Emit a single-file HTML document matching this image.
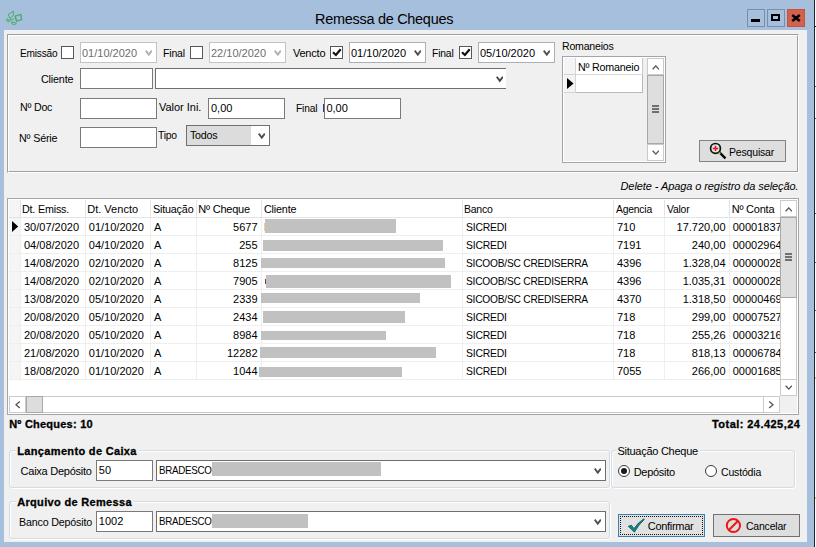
<!DOCTYPE html>
<html lang="pt-BR"><head><meta charset="utf-8"><title>Remessa de Cheques</title>
<style>
html,body{margin:0;padding:0}
body{width:816px;height:547px;position:relative;overflow:hidden;background:#a6bfdd;font-family:'Liberation Sans',sans-serif;font-size:11px;color:#000}
.a{position:absolute;display:block}
.t{position:absolute;white-space:pre;transform-origin:0 0}
.clipc{}
</style></head>
<body>
<div class="a" style="left:4px;top:30px;width:803px;height:512px;background:#f0f0f0;"></div>
<div class="a" style="left:814px;top:0px;width:1px;height:547px;background:#20202c;"></div>
<div class="a" style="left:815px;top:0px;width:1px;height:547px;background:#fff;"></div>
<div class="a" style="left:815px;top:26px;width:1px;height:1px;background:#20202c;"></div>
<div class="a" style="left:815px;top:86px;width:1px;height:1px;background:#555;"></div>
<div class="a" style="left:815px;top:118px;width:1px;height:1px;background:#555;"></div>
<div class="a" style="left:815px;top:213px;width:1px;height:1px;background:#555;"></div>
<div class="a" style="left:815px;top:262px;width:1px;height:1px;background:#555;"></div>
<div class="a" style="left:815px;top:310px;width:1px;height:1px;background:#555;"></div>
<div class="a" style="left:815px;top:352px;width:1px;height:1px;background:#555;"></div>
<div class="a" style="left:815px;top:377px;width:1px;height:2px;background:#e8c860;"></div>
<div class="a" style="left:815px;top:497px;width:1px;height:2px;background:#e8c860;"></div>
<div class="a" style="left:747px;top:9px;width:18px;height:18px;border:1px solid #7c8da6;box-sizing:border-box;"><div class="a" style="left:3px;top:9px;width:9px;height:3px;background:#000"></div></div>
<div class="a" style="left:767px;top:9px;width:18px;height:18px;border:1px solid #7c8da6;box-sizing:border-box;"><div class="a" style="left:3px;top:4px;width:5px;height:3px;border:2px solid #000"></div></div>
<div class="a" style="left:787px;top:9px;width:18px;height:18px;background:#d4614d;border:1px solid #c8523f;box-sizing:border-box;"><svg class="a" style="left:3px;top:4px" width="10" height="9" viewBox="0 0 10 9"><path d="M1.2 1 L8.8 7 M8.8 1 L1.2 7" stroke="#000" stroke-width="2.5" fill="none"/></svg></div>
<svg class="a" style="left:4px;top:9px" width="20" height="18" viewBox="4 9 20 18" fill="none" stroke="#3fae57" stroke-width="1" stroke-linejoin="round" opacity="0.9">
<path d="M8 14.6 L13.4 11.2 L13.4 15.4 L10 18.3 Z"/>
<path d="M15.2 16.2 L20.8 14.4 L21.6 19.7 L16.6 21.2 Z" stroke-width="1.4"/>
<path d="M6.3 19.4 L8 19 L9.6 21.2 L7.8 21.9 Z"/>
<path d="M11.4 22.8 L14.6 22 L16.4 23.8 L12.9 24.6 Z"/>
<path d="M10.8 19.8 L10 18.3 M10.8 19.8 L15.2 18.6 M10.8 19.8 L9 20.3 M10.8 19.8 L12.5 22.4" stroke-width="0.8"/>
</svg>
<div class="a" style="left:7px;top:34px;width:792px;height:139px;box-sizing:border-box;border:1px solid #fff;border-top-color:#a0a0a0;border-left-color:#a0a0a0;"></div>
<div class="a" style="left:8px;top:35px;width:790px;height:137px;box-sizing:border-box;border:1px solid #a0a0a0;border-top-color:#fff;border-left-color:#fff;"></div>
<div class="a" style="left:61px;top:46px;width:13px;height:13px;box-sizing:border-box;border:1px solid #585858;background:#fff;"></div>
<div class="a" style="left:80px;top:42px;width:77px;height:21px;box-sizing:border-box;border:1px solid #c4c4c4;background:#fff;"></div>
<svg class="a" style="left:144.5px;top:50px" width="7.6" height="6.6" viewBox="0 0 7.6 6.6"><polyline points="0.7,0.7 3.8,4.699999999999999 6.8999999999999995,0.7" fill="none" stroke="#b0b0b0" stroke-width="1.9"/></svg>
<div class="a" style="left:190px;top:46px;width:13px;height:13px;box-sizing:border-box;border:1px solid #585858;background:#fff;"></div>
<div class="a" style="left:209px;top:42px;width:77px;height:21px;box-sizing:border-box;border:1px solid #c4c4c4;background:#fff;"></div>
<svg class="a" style="left:273.5px;top:50px" width="7.6" height="6.6" viewBox="0 0 7.6 6.6"><polyline points="0.7,0.7 3.8,4.699999999999999 6.8999999999999995,0.7" fill="none" stroke="#b0b0b0" stroke-width="1.9"/></svg>
<div class="a" style="left:330px;top:46px;width:13px;height:13px;box-sizing:border-box;border:1px solid #585858;background:#fff;"><svg class="a" style="left:0;top:0" width="11" height="11" viewBox="0 0 11 11"><path d="M2 5.3 L4.9 8 L9.7 2.3" fill="none" stroke="#111" stroke-width="2.2"/></svg></div>
<div class="a" style="left:349px;top:42px;width:77px;height:21px;box-sizing:border-box;border:1px solid #a9b0b8;background:#fff;"></div>
<svg class="a" style="left:413.5px;top:50px" width="7.6" height="6.6" viewBox="0 0 7.6 6.6"><polyline points="0.7,0.7 3.8,4.699999999999999 6.8999999999999995,0.7" fill="none" stroke="#505050" stroke-width="1.9"/></svg>
<div class="a" style="left:459px;top:46px;width:13px;height:13px;box-sizing:border-box;border:1px solid #585858;background:#fff;"><svg class="a" style="left:0;top:0" width="11" height="11" viewBox="0 0 11 11"><path d="M2 5.3 L4.9 8 L9.7 2.3" fill="none" stroke="#111" stroke-width="2.2"/></svg></div>
<div class="a" style="left:478px;top:42px;width:77px;height:21px;box-sizing:border-box;border:1px solid #a9b0b8;background:#fff;"></div>
<svg class="a" style="left:542.5px;top:50px" width="7.6" height="6.6" viewBox="0 0 7.6 6.6"><polyline points="0.7,0.7 3.8,4.699999999999999 6.8999999999999995,0.7" fill="none" stroke="#505050" stroke-width="1.9"/></svg>
<div class="a" style="left:80px;top:68px;width:73px;height:21px;box-sizing:border-box;border:1px solid #7a7a7a;background:#fff;"></div>
<div class="a" style="left:155px;top:68px;width:351px;height:21px;box-sizing:border-box;border:1px solid #6e6e6e;border-right:none;background:#fff;"></div>
<svg class="a" style="left:495.8px;top:76px" width="7.6" height="6.8" viewBox="0 0 7.6 6.8"><polyline points="0.7,0.7 3.8,4.8999999999999995 6.8999999999999995,0.7" fill="none" stroke="#484848" stroke-width="1.9"/></svg>
<div class="a" style="left:80px;top:98px;width:77px;height:21px;box-sizing:border-box;border:1px solid #7a7a7a;background:#fff;"></div>
<div class="a" style="left:208px;top:98px;width:77px;height:21px;box-sizing:border-box;border:1px solid #7a7a7a;background:#fff;"></div>
<div class="a" style="left:323px;top:104px;width:1px;height:8px;background:#34348c;"></div>
<div class="a" style="left:324px;top:98px;width:77px;height:21px;box-sizing:border-box;border:1px solid #7a7a7a;background:#fff;"></div>
<div class="a" style="left:80px;top:127px;width:77px;height:21px;box-sizing:border-box;border:1px solid #7a7a7a;background:#fff;"></div>
<div class="a" style="left:186px;top:125px;width:84px;height:21px;box-sizing:border-box;border:1px solid #707070;background:#dcdcdc;"><div class="a" style="left:64px;top:0;width:18px;height:19px;background:#fff"></div></div>
<svg class="a" style="left:257.6px;top:133px" width="7.6" height="6.6" viewBox="0 0 7.6 6.6"><polyline points="0.7,0.7 3.8,4.699999999999999 6.8999999999999995,0.7" fill="none" stroke="#505050" stroke-width="1.9"/></svg>
<div class="a" style="left:562px;top:56px;width:104px;height:107px;box-sizing:border-box;border:1px solid #a2a5ab;"></div>
<div class="a" style="left:563px;top:57px;width:102px;height:105px;box-sizing:border-box;border:1px solid #fff;"></div>
<div class="a" style="left:564px;top:58px;width:12px;height:17px;box-sizing:border-box;border-right:1px solid #d4d4d4;border-bottom:1px solid #d4d4d4;background:#f4f4f4;"></div>
<div class="a" style="left:576px;top:58px;width:67px;height:17px;box-sizing:border-box;border-right:1px solid #c8c8c8;border-bottom:1px solid #d8d8d8;background:#fff;"></div>
<div class="a" style="left:564px;top:75px;width:12px;height:18px;box-sizing:border-box;border-right:1px solid #d4d4d4;border-bottom:1px solid #d4d4d4;background:#f4f4f4;"></div>
<div class="a" style="left:576px;top:75px;width:67px;height:18px;box-sizing:border-box;border-right:1px solid #b8b8b8;border-bottom:1px solid #b8b8b8;background:#fff;"></div>
<svg class="a" style="left:567px;top:78px" width="7" height="12" viewBox="0 0 7 12"><path d="M0 0 L6.5 5.5 L0 11 Z" fill="#000"/></svg>
<div class="a" style="left:647px;top:58px;width:17px;height:103px;background:#fff;box-sizing:border-box;border:1px solid #cacaca;"></div>
<div class="a" style="left:647px;top:58px;width:17px;height:17px;box-sizing:border-box;border:1px solid #cacaca;"></div>
<div class="a" style="left:647px;top:144px;width:17px;height:17px;box-sizing:border-box;border:1px solid #cacaca;"></div>
<svg class="a" style="left:651.8px;top:64.6px" width="7.6" height="6" viewBox="0 0 7.6 6"><polyline points="0.7,4.3 3.8,0.9 6.8999999999999995,4.3" fill="none" stroke="#555" stroke-width="1.3"/></svg>
<div class="a" style="left:647px;top:75px;width:17px;height:69px;box-sizing:border-box;border:1px solid #a8a8a8;background:#dedede;"></div>
<div class="a" style="left:652px;top:105px;width:7px;height:2px;background:#707070;"></div>
<div class="a" style="left:652px;top:108px;width:7px;height:2px;background:#707070;"></div>
<div class="a" style="left:652px;top:111px;width:7px;height:2px;background:#707070;"></div>
<svg class="a" style="left:651.8px;top:150px" width="7.6" height="6" viewBox="0 0 7.6 6"><polyline points="0.7,0.7 3.8,4.1 6.8999999999999995,0.7" fill="none" stroke="#555" stroke-width="1.3"/></svg>
<div class="a" style="left:699px;top:140px;width:87px;height:22px;box-sizing:border-box;border:1px solid #828282;background:#dedede;"></div>
<svg class="a" style="left:708px;top:141px" width="20" height="20" viewBox="708 141 20 20">
<path d="M719.2 152.1 L725.5 158.4" stroke="#0a0a0a" stroke-width="2.4"/>
<circle cx="715.5" cy="148.4" r="4.9" fill="#d6e4e8" stroke="#111" stroke-width="1.7"/>
<path d="M712.8 148.4 H718.2 M715.5 145.8 V151.1" stroke="#f01010" stroke-width="1.5"/>
<circle cx="719.7" cy="153.1" r="0.9" fill="#f0e428"/>
</svg>
<div class="a" style="left:7px;top:198px;width:792px;height:217px;box-sizing:border-box;border:1px solid #a2a5ab;background:#fff;"></div>
<div class="a" style="left:9px;top:200px;width:11px;height:180px;background:#f5f5f5;"></div>
<div class="a" style="left:9px;top:217px;width:771px;height:1px;background:#e4e4e4;"></div>
<div class="a" style="left:9px;top:235px;width:771px;height:1px;background:#efefef;"></div>
<div class="a" style="left:9px;top:253px;width:771px;height:1px;background:#efefef;"></div>
<div class="a" style="left:9px;top:271px;width:771px;height:1px;background:#efefef;"></div>
<div class="a" style="left:9px;top:289px;width:771px;height:1px;background:#efefef;"></div>
<div class="a" style="left:9px;top:307px;width:771px;height:1px;background:#efefef;"></div>
<div class="a" style="left:9px;top:325px;width:771px;height:1px;background:#efefef;"></div>
<div class="a" style="left:9px;top:343px;width:771px;height:1px;background:#efefef;"></div>
<div class="a" style="left:9px;top:361px;width:771px;height:1px;background:#efefef;"></div>
<div class="a" style="left:9px;top:379px;width:771px;height:1px;background:#efefef;"></div>
<div class="a" style="left:20px;top:200px;width:1px;height:18px;background:#e4e4e4;"></div>
<div class="a" style="left:20px;top:218px;width:1px;height:162px;background:#efefef;"></div>
<div class="a" style="left:85px;top:200px;width:1px;height:18px;background:#e4e4e4;"></div>
<div class="a" style="left:85px;top:218px;width:1px;height:162px;background:#efefef;"></div>
<div class="a" style="left:150px;top:200px;width:1px;height:18px;background:#e4e4e4;"></div>
<div class="a" style="left:150px;top:218px;width:1px;height:162px;background:#efefef;"></div>
<div class="a" style="left:196px;top:200px;width:1px;height:18px;background:#e4e4e4;"></div>
<div class="a" style="left:196px;top:218px;width:1px;height:162px;background:#efefef;"></div>
<div class="a" style="left:261px;top:200px;width:1px;height:18px;background:#e4e4e4;"></div>
<div class="a" style="left:261px;top:218px;width:1px;height:162px;background:#efefef;"></div>
<div class="a" style="left:462px;top:200px;width:1px;height:18px;background:#e4e4e4;"></div>
<div class="a" style="left:462px;top:218px;width:1px;height:162px;background:#efefef;"></div>
<div class="a" style="left:613px;top:200px;width:1px;height:18px;background:#e4e4e4;"></div>
<div class="a" style="left:613px;top:218px;width:1px;height:162px;background:#efefef;"></div>
<div class="a" style="left:664px;top:200px;width:1px;height:18px;background:#e4e4e4;"></div>
<div class="a" style="left:664px;top:218px;width:1px;height:162px;background:#efefef;"></div>
<div class="a" style="left:729px;top:200px;width:1px;height:18px;background:#e4e4e4;"></div>
<div class="a" style="left:729px;top:218px;width:1px;height:162px;background:#efefef;"></div>
<div class="a" style="left:265px;top:219px;width:131px;height:14px;background:#c1c1c1;"></div>
<div class="a" style="left:263px;top:240px;width:180px;height:11px;background:#c1c1c1;"></div>
<div class="a" style="left:261px;top:258px;width:184px;height:10px;background:#c1c1c1;"></div>
<div class="a" style="left:266px;top:275px;width:185px;height:13px;background:#c1c1c1;"></div>
<div class="a" style="left:261px;top:293px;width:159px;height:10px;background:#c1c1c1;"></div>
<div class="a" style="left:263px;top:311px;width:142px;height:12px;background:#c1c1c1;"></div>
<div class="a" style="left:261px;top:331px;width:125px;height:9px;background:#c1c1c1;"></div>
<div class="a" style="left:260px;top:347px;width:176px;height:11px;background:#c1c1c1;"></div>
<div class="a" style="left:259px;top:367px;width:143px;height:10px;background:#c1c1c1;"></div>
<div class="a" style="left:264px;top:223px;width:1px;height:8px;background:#f3cf8e;"></div>
<div class="a" style="left:265px;top:279px;width:1px;height:5px;background:#5a4658;"></div>
<svg class="a" style="left:12px;top:221px" width="7" height="12" viewBox="0 0 7 12"><path d="M0 0 L6.2 5.5 L0 11 Z" fill="#000"/></svg>
<div class="t clipc" style="left:732.70px;top:220px;font-size:11px;line-height:14px;">000018375</div>
<div class="t clipc" style="left:732.70px;top:238px;font-size:11px;line-height:14px;">000029645</div>
<div class="t clipc" style="left:732.70px;top:256px;font-size:11px;line-height:14px;">000000285</div>
<div class="t clipc" style="left:732.70px;top:274px;font-size:11px;line-height:14px;">000000285</div>
<div class="t clipc" style="left:732.70px;top:292px;font-size:11px;line-height:14px;">000004695</div>
<div class="t clipc" style="left:732.70px;top:310px;font-size:11px;line-height:14px;">000075275</div>
<div class="t clipc" style="left:732.70px;top:328px;font-size:11px;line-height:14px;">000032165</div>
<div class="t clipc" style="left:732.70px;top:346px;font-size:11px;line-height:14px;">000067845</div>
<div class="t clipc" style="left:732.70px;top:364px;font-size:11px;line-height:14px;">000016855</div>
<div class="a" style="left:780px;top:200px;width:17px;height:196px;background:#fff;"></div>
<div class="a" style="left:780px;top:200px;width:17px;height:196px;background:#fff;box-sizing:border-box;border:1px solid #cacaca;"></div>
<div class="a" style="left:780px;top:200px;width:17px;height:17px;box-sizing:border-box;border:1px solid #cacaca;"></div>
<div class="a" style="left:780px;top:379px;width:17px;height:17px;box-sizing:border-box;border:1px solid #cacaca;"></div>
<svg class="a" style="left:784.8px;top:206.6px" width="7.6" height="6" viewBox="0 0 7.6 6"><polyline points="0.7,4.3 3.8,0.9 6.8999999999999995,4.3" fill="none" stroke="#555" stroke-width="1.3"/></svg>
<div class="a" style="left:780px;top:217px;width:17px;height:81px;box-sizing:border-box;border:1px solid #a8a8a8;background:#dedede;"></div>
<div class="a" style="left:785px;top:253px;width:7px;height:2px;background:#707070;"></div>
<div class="a" style="left:785px;top:256px;width:7px;height:2px;background:#707070;"></div>
<div class="a" style="left:785px;top:259px;width:7px;height:2px;background:#707070;"></div>
<svg class="a" style="left:784.8px;top:385px" width="7.6" height="6" viewBox="0 0 7.6 6"><polyline points="0.7,0.7 3.8,4.1 6.8999999999999995,0.7" fill="none" stroke="#555" stroke-width="1.3"/></svg>
<div class="a" style="left:9px;top:396px;width:771px;height:17px;background:#fff;border:1px solid #cacaca;box-sizing:border-box;"></div>
<div class="a" style="left:9px;top:396px;width:17px;height:17px;border:1px solid #cacaca;box-sizing:border-box;"></div>
<div class="a" style="left:763px;top:396px;width:17px;height:17px;border:1px solid #cacaca;box-sizing:border-box;"></div>
<svg class="a" style="left:15px;top:401px" width="6" height="8" viewBox="0 0 6 8"><polyline points="4.8,0.5 1,3.8 4.8,7.1" fill="none" stroke="#555" stroke-width="1.3"/></svg>
<svg class="a" style="left:768px;top:401px" width="6" height="8" viewBox="0 0 6 8"><polyline points="1.2,0.5 5,3.8 1.2,7.1" fill="none" stroke="#555" stroke-width="1.3"/></svg>
<div class="a" style="left:26px;top:396px;width:17px;height:17px;box-sizing:border-box;border:1px solid #a8a8a8;background:#dddddd;"></div>
<div class="a" style="left:780px;top:396px;width:17px;height:17px;background:#f0f0f0;"></div>
<div class="a" style="left:10px;top:451px;width:601px;height:38px;box-sizing:border-box;border:1px solid #fff;border-radius:3px;"></div>
<div class="a" style="left:9px;top:450px;width:601px;height:38px;box-sizing:border-box;border:1px solid #d3dce4;border-radius:3px;"></div>
<div class="a" style="left:16.3px;top:449px;width:123.00000000000001px;height:4px;background:#f0f0f0;"></div>
<div class="a" style="left:96px;top:460px;width:57px;height:21px;box-sizing:border-box;border:1px solid #7a7a7a;background:#fff;"></div>
<div class="a" style="left:156px;top:460px;width:450px;height:21px;box-sizing:border-box;border:1px solid #6e6e6e;background:#fff;"></div>
<div class="a" style="left:212px;top:462px;width:169px;height:14px;background:#c1c1c1;"></div>
<svg class="a" style="left:593.5px;top:468px" width="7.6" height="6.6" viewBox="0 0 7.6 6.6"><polyline points="0.7,0.7 3.8,4.699999999999999 6.8999999999999995,0.7" fill="none" stroke="#505050" stroke-width="1.9"/></svg>
<div class="a" style="left:10px;top:502px;width:601px;height:38px;box-sizing:border-box;border:1px solid #fff;border-radius:3px;"></div>
<div class="a" style="left:9px;top:501px;width:601px;height:38px;box-sizing:border-box;border:1px solid #d3dce4;border-radius:3px;"></div>
<div class="a" style="left:16.2px;top:500px;width:118.2px;height:4px;background:#f0f0f0;"></div>
<div class="a" style="left:96px;top:511px;width:57px;height:21px;box-sizing:border-box;border:1px solid #7a7a7a;background:#fff;"></div>
<div class="a" style="left:156px;top:511px;width:450px;height:21px;box-sizing:border-box;border:1px solid #6e6e6e;background:#fff;"></div>
<div class="a" style="left:212px;top:514px;width:96px;height:14px;background:#c1c1c1;"></div>
<svg class="a" style="left:593.5px;top:519px" width="7.6" height="6.6" viewBox="0 0 7.6 6.6"><polyline points="0.7,0.7 3.8,4.699999999999999 6.8999999999999995,0.7" fill="none" stroke="#505050" stroke-width="1.9"/></svg>
<div class="a" style="left:612px;top:451px;width:184px;height:38px;box-sizing:border-box;border:1px solid #fff;border-radius:3px;"></div>
<div class="a" style="left:611px;top:450px;width:184px;height:38px;box-sizing:border-box;border:1px solid #d3dce4;border-radius:3px;"></div>
<div class="a" style="left:616.4px;top:449px;width:83.60000000000002px;height:4px;background:#f0f0f0;"></div>
<div class="a" style="left:618px;top:465px;width:12px;height:12px;box-sizing:border-box;border:1px solid #3a3a3a;border-radius:50%;background:#fff;"><div class="a" style="left:2px;top:2px;width:6px;height:6px;border-radius:50%;background:#1a1a1a"></div></div>
<div class="a" style="left:705px;top:465px;width:12px;height:12px;box-sizing:border-box;border:1px solid #3a3a3a;border-radius:50%;background:#fff;"></div>
<div class="a" style="left:618px;top:514px;width:87px;height:23px;box-sizing:border-box;border:1px solid #3c7fb1;background:#e1e1e1;"><div class="a" style="left:1px;top:1px;width:81px;height:17px;border:1px dotted #111"></div></div>
<svg class="a" style="left:626px;top:518px" width="19" height="16" viewBox="626 518 19 16">
<path d="M628.2 526.3 L631.4 525.2 L634 528.6 Q638 522.4 643.9 518.8 L644.3 519.5 Q638.6 524.6 634.4 532.2 Z" fill="#0f8a8a" stroke="#0a4444" stroke-width="0.7" stroke-linejoin="round"/>
</svg>
<div class="a" style="left:713px;top:514px;width:87px;height:23px;box-sizing:border-box;border:1px solid #707070;background:#dedede;"></div>
<svg class="a" style="left:724px;top:517px" width="18" height="18" viewBox="724 517 18 18">
<circle cx="733.4" cy="525.5" r="6.6" fill="none" stroke="#f01414" stroke-width="2"/>
<path d="M728.9 530 L737.9 521" stroke="#f01414" stroke-width="2"/>
</svg>
<div class="t " style="left:315.07px;top:9px;font-size:15.5px;line-height:19px;letter-spacing:-0.289px;transform:scaleX(0.9323);">Remessa de Cheques</div>
<div class="t " style="left:19.60px;top:46px;font-size:11px;line-height:14px;letter-spacing:-0.229px;transform:scaleX(0.9192);">Emissão</div>
<div class="t " style="left:82.00px;top:46px;font-size:11px;line-height:14px;color:#6d6d6d;">01/10/2020</div>
<div class="t " style="left:162.70px;top:46px;font-size:11px;line-height:14px;letter-spacing:-0.184px;transform:scaleX(0.9531);">Final</div>
<div class="t " style="left:211.00px;top:46px;font-size:11px;line-height:14px;color:#6d6d6d;">22/10/2020</div>
<div class="t " style="left:292.90px;top:46px;font-size:11px;line-height:14px;letter-spacing:-0.184px;">Vencto</div>
<div class="t " style="left:351.00px;top:46px;font-size:11px;line-height:14px;">01/10/2020</div>
<div class="t " style="left:431.70px;top:46px;font-size:11px;line-height:14px;letter-spacing:-0.187px;transform:scaleX(0.9403);">Final</div>
<div class="t " style="left:480.00px;top:46px;font-size:11px;line-height:14px;">05/10/2020</div>
<div class="t " style="left:40.70px;top:72px;font-size:11px;line-height:14px;letter-spacing:-0.175px;transform:scaleX(0.9766);">Cliente</div>
<div class="t " style="left:19.60px;top:100px;font-size:11px;line-height:14px;letter-spacing:-0.217px;transform:scaleX(0.9679);">Nº Doc</div>
<div class="t " style="left:159.00px;top:100px;font-size:11px;line-height:14px;letter-spacing:-0.026px;">Valor Ini.</div>
<div class="t " style="left:211.00px;top:101px;font-size:11px;line-height:14px;">0,00</div>
<div class="t " style="left:295.90px;top:101px;font-size:11px;line-height:14px;letter-spacing:-0.189px;transform:scaleX(0.9275);">Final</div>
<div class="t " style="left:326.40px;top:101px;font-size:11px;line-height:14px;">0,00</div>
<div class="t " style="left:18.60px;top:131px;font-size:11px;line-height:14px;letter-spacing:-0.178px;transform:scaleX(0.9763);">Nº Série</div>
<div class="t " style="left:158.00px;top:128px;font-size:11px;line-height:14px;letter-spacing:-0.222px;transform:scaleX(0.9403);">Tipo</div>
<div class="t " style="left:190.40px;top:128px;font-size:11px;line-height:14px;letter-spacing:-0.231px;transform:scaleX(0.9713);">Todos</div>
<div class="t " style="left:562.30px;top:39px;font-size:11px;line-height:14px;letter-spacing:-0.219px;transform:scaleX(0.9598);">Romaneios</div>
<div class="t " style="left:577.80px;top:60px;font-size:11px;line-height:14px;letter-spacing:-0.201px;transform:scaleX(0.9725);">Nº Romaneio</div>
<div class="t " style="left:729.40px;top:145px;font-size:11px;line-height:14px;letter-spacing:-0.193px;transform:scaleX(0.9559);">Pesquisar</div>
<div class="t " style="left:620.50px;top:179px;font-size:11px;line-height:14px;letter-spacing:-0.085px;font-style:italic;">Delete - Apaga o registro da seleção.</div>
<div class="t " style="left:22.30px;top:202px;font-size:11px;line-height:14px;letter-spacing:-0.171px;transform:scaleX(0.9729);">Dt. Emiss.</div>
<div class="t " style="left:87.20px;top:202px;font-size:11px;line-height:14px;letter-spacing:0.018px;">Dt. Vencto</div>
<div class="t " style="left:152.50px;top:202px;font-size:11px;line-height:14px;letter-spacing:-0.187px;transform:scaleX(0.9787);">Situação</div>
<div class="t " style="left:198.30px;top:202px;font-size:11px;line-height:14px;letter-spacing:-0.217px;">Nº Cheque</div>
<div class="t " style="left:263.90px;top:202px;font-size:11px;line-height:14px;letter-spacing:-0.175px;transform:scaleX(0.9766);">Cliente</div>
<div class="t " style="left:464.30px;top:202px;font-size:11px;line-height:14px;letter-spacing:-0.244px;transform:scaleX(0.9537);">Banco</div>
<div class="t " style="left:615.80px;top:202px;font-size:11px;line-height:14px;letter-spacing:-0.216px;transform:scaleX(0.9406);">Agencia</div>
<div class="t " style="left:666.70px;top:202px;font-size:11px;line-height:14px;letter-spacing:-0.201px;transform:scaleX(0.9387);">Valor</div>
<div class="t " style="left:731.70px;top:202px;font-size:11px;line-height:14px;letter-spacing:-0.222px;">Nº Conta</div>
<div class="t " style="left:24.00px;top:220px;font-size:11px;line-height:14px;">30/07/2020</div>
<div class="t " style="left:88.80px;top:220px;font-size:11px;line-height:14px;">01/10/2020</div>
<div class="t " style="left:154.00px;top:220px;font-size:11px;line-height:14px;">A</div>
<div class="t " style="left:233.05px;top:220px;font-size:11px;line-height:14px;">5677</div>
<div class="t " style="left:465.50px;top:220px;font-size:11px;line-height:14px;letter-spacing:-0.236px;transform:scaleX(0.9456);">SICREDI</div>
<div class="t " style="left:617.00px;top:220px;font-size:11px;line-height:14px;">710</div>
<div class="t " style="left:676.58px;top:220px;font-size:11px;line-height:14px;">17.720,00</div>
<div class="t " style="left:24.00px;top:238px;font-size:11px;line-height:14px;">04/08/2020</div>
<div class="t " style="left:88.80px;top:238px;font-size:11px;line-height:14px;">04/10/2020</div>
<div class="t " style="left:154.00px;top:238px;font-size:11px;line-height:14px;">A</div>
<div class="t " style="left:239.16px;top:238px;font-size:11px;line-height:14px;">255</div>
<div class="t " style="left:465.50px;top:238px;font-size:11px;line-height:14px;letter-spacing:-0.236px;transform:scaleX(0.9456);">SICREDI</div>
<div class="t " style="left:617.00px;top:238px;font-size:11px;line-height:14px;">7191</div>
<div class="t " style="left:691.87px;top:238px;font-size:11px;line-height:14px;">240,00</div>
<div class="t " style="left:24.00px;top:256px;font-size:11px;line-height:14px;">14/08/2020</div>
<div class="t " style="left:88.80px;top:256px;font-size:11px;line-height:14px;">02/10/2020</div>
<div class="t " style="left:154.00px;top:256px;font-size:11px;line-height:14px;">A</div>
<div class="t " style="left:233.05px;top:256px;font-size:11px;line-height:14px;">8125</div>
<div class="t " style="left:465.50px;top:256px;font-size:11px;line-height:14px;letter-spacing:-0.234px;transform:scaleX(0.9258);">SICOOB/SC CREDISERRA</div>
<div class="t " style="left:617.00px;top:256px;font-size:11px;line-height:14px;">4396</div>
<div class="t " style="left:682.70px;top:256px;font-size:11px;line-height:14px;">1.328,04</div>
<div class="t " style="left:24.00px;top:274px;font-size:11px;line-height:14px;">14/08/2020</div>
<div class="t " style="left:88.80px;top:274px;font-size:11px;line-height:14px;">02/10/2020</div>
<div class="t " style="left:154.00px;top:274px;font-size:11px;line-height:14px;">A</div>
<div class="t " style="left:233.05px;top:274px;font-size:11px;line-height:14px;">7905</div>
<div class="t " style="left:465.50px;top:274px;font-size:11px;line-height:14px;letter-spacing:-0.234px;transform:scaleX(0.9258);">SICOOB/SC CREDISERRA</div>
<div class="t " style="left:617.00px;top:274px;font-size:11px;line-height:14px;">4396</div>
<div class="t " style="left:682.70px;top:274px;font-size:11px;line-height:14px;">1.035,31</div>
<div class="t " style="left:24.00px;top:292px;font-size:11px;line-height:14px;">13/08/2020</div>
<div class="t " style="left:88.80px;top:292px;font-size:11px;line-height:14px;">05/10/2020</div>
<div class="t " style="left:154.00px;top:292px;font-size:11px;line-height:14px;">A</div>
<div class="t " style="left:233.05px;top:292px;font-size:11px;line-height:14px;">2339</div>
<div class="t " style="left:465.50px;top:292px;font-size:11px;line-height:14px;letter-spacing:-0.234px;transform:scaleX(0.9258);">SICOOB/SC CREDISERRA</div>
<div class="t " style="left:617.00px;top:292px;font-size:11px;line-height:14px;">4370</div>
<div class="t " style="left:682.70px;top:292px;font-size:11px;line-height:14px;">1.318,50</div>
<div class="t " style="left:24.00px;top:310px;font-size:11px;line-height:14px;">20/08/2020</div>
<div class="t " style="left:88.80px;top:310px;font-size:11px;line-height:14px;">05/10/2020</div>
<div class="t " style="left:154.00px;top:310px;font-size:11px;line-height:14px;">A</div>
<div class="t " style="left:233.05px;top:310px;font-size:11px;line-height:14px;">2434</div>
<div class="t " style="left:465.50px;top:310px;font-size:11px;line-height:14px;letter-spacing:-0.236px;transform:scaleX(0.9456);">SICREDI</div>
<div class="t " style="left:617.00px;top:310px;font-size:11px;line-height:14px;">718</div>
<div class="t " style="left:691.87px;top:310px;font-size:11px;line-height:14px;">299,00</div>
<div class="t " style="left:24.00px;top:328px;font-size:11px;line-height:14px;">20/08/2020</div>
<div class="t " style="left:88.80px;top:328px;font-size:11px;line-height:14px;">05/10/2020</div>
<div class="t " style="left:154.00px;top:328px;font-size:11px;line-height:14px;">A</div>
<div class="t " style="left:233.05px;top:328px;font-size:11px;line-height:14px;">8984</div>
<div class="t " style="left:465.50px;top:328px;font-size:11px;line-height:14px;letter-spacing:-0.236px;transform:scaleX(0.9456);">SICREDI</div>
<div class="t " style="left:617.00px;top:328px;font-size:11px;line-height:14px;">718</div>
<div class="t " style="left:691.87px;top:328px;font-size:11px;line-height:14px;">255,26</div>
<div class="t " style="left:24.00px;top:346px;font-size:11px;line-height:14px;">21/08/2020</div>
<div class="t " style="left:88.80px;top:346px;font-size:11px;line-height:14px;">01/10/2020</div>
<div class="t " style="left:154.00px;top:346px;font-size:11px;line-height:14px;">A</div>
<div class="t " style="left:226.93px;top:346px;font-size:11px;line-height:14px;">12282</div>
<div class="t " style="left:465.50px;top:346px;font-size:11px;line-height:14px;letter-spacing:-0.236px;transform:scaleX(0.9456);">SICREDI</div>
<div class="t " style="left:617.00px;top:346px;font-size:11px;line-height:14px;">718</div>
<div class="t " style="left:691.87px;top:346px;font-size:11px;line-height:14px;">818,13</div>
<div class="t " style="left:24.00px;top:364px;font-size:11px;line-height:14px;">18/08/2020</div>
<div class="t " style="left:88.80px;top:364px;font-size:11px;line-height:14px;">01/10/2020</div>
<div class="t " style="left:154.00px;top:364px;font-size:11px;line-height:14px;">A</div>
<div class="t " style="left:233.05px;top:364px;font-size:11px;line-height:14px;">1044</div>
<div class="t " style="left:465.50px;top:364px;font-size:11px;line-height:14px;letter-spacing:-0.236px;transform:scaleX(0.9456);">SICREDI</div>
<div class="t " style="left:617.00px;top:364px;font-size:11px;line-height:14px;">7055</div>
<div class="t " style="left:691.87px;top:364px;font-size:11px;line-height:14px;">266,00</div>
<div class="t " style="left:9.20px;top:417px;font-size:11px;line-height:14px;letter-spacing:0.230px;font-weight:bold;-webkit-text-stroke:0.3px #000;">Nº Cheques: 10</div>
<div class="t " style="left:712.00px;top:417px;font-size:11px;line-height:14px;letter-spacing:0.447px;font-weight:bold;-webkit-text-stroke:0.3px #000;">Total: 24.425,24</div>
<div class="t " style="left:17.30px;top:444px;font-size:11px;line-height:14px;letter-spacing:0.335px;font-weight:bold;-webkit-text-stroke:0.3px #000;">Lançamento de Caixa</div>
<div class="t " style="left:20.60px;top:464px;font-size:11px;line-height:14px;letter-spacing:-0.252px;">Caixa Depósito</div>
<div class="t " style="left:98.80px;top:463px;font-size:11px;line-height:14px;">50</div>
<div class="t " style="left:158.60px;top:463px;font-size:11px;line-height:14px;letter-spacing:-0.300px;transform:scaleX(0.8872);">BRADESCO</div>
<div class="t " style="left:17.20px;top:495px;font-size:11px;line-height:14px;letter-spacing:0.323px;font-weight:bold;-webkit-text-stroke:0.3px #000;">Arquivo de Remessa</div>
<div class="t " style="left:18.90px;top:515px;font-size:11px;line-height:14px;letter-spacing:-0.184px;transform:scaleX(0.9727);">Banco Depósito</div>
<div class="t " style="left:98.80px;top:514px;font-size:11px;line-height:14px;">1002</div>
<div class="t " style="left:158.60px;top:514px;font-size:11px;line-height:14px;letter-spacing:-0.300px;transform:scaleX(0.8872);">BRADESCO</div>
<div class="t " style="left:617.40px;top:444px;font-size:11px;line-height:14px;letter-spacing:-0.263px;">Situação Cheque</div>
<div class="t " style="left:633.70px;top:465px;font-size:11px;line-height:14px;letter-spacing:-0.285px;">Depósito</div>
<div class="t " style="left:720.60px;top:465px;font-size:11px;line-height:14px;letter-spacing:-0.198px;transform:scaleX(0.9578);">Custódia</div>
<div class="t " style="left:647.80px;top:519px;font-size:11px;line-height:14px;letter-spacing:-0.303px;">Confirmar</div>
<div class="t " style="left:745.70px;top:519px;font-size:11px;line-height:14px;letter-spacing:-0.200px;transform:scaleX(0.9498);">Cancelar</div>
</body></html>
